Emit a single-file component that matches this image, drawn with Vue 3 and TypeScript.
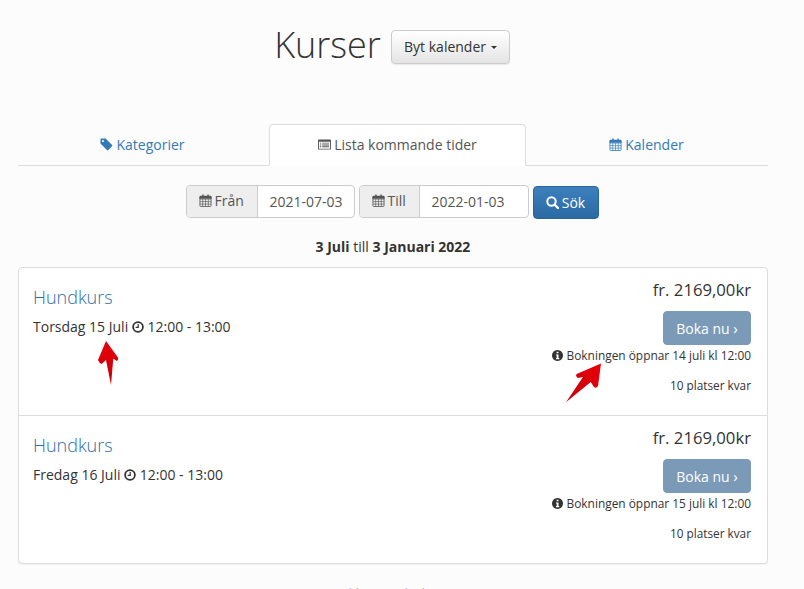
<script setup lang="ts">
interface Course { title: string; date: string; opens: string }
const courses: Course[] = [
  { title: 'Hundkurs', date: 'Torsdag 15 Juli', opens: 'Bokningen öppnar 14 juli kl 12:00' },
  { title: 'Hundkurs', date: 'Fredag 16 Juli', opens: 'Bokningen öppnar 15 juli kl 12:00' },
]
const calGrid = 'M.5 5.5H12.5M.5 8.2H12.5M.5 10.9H12.5M3.5 5.5V13.5M6.5 5.5V13.5M9.5 5.5V13.5'
const calTop = 'M1 2H3V.5H4.5V2H8.5V.5H10V2H12Q13 2 13 3V5H0V3Q0 2 1 2Z'
</script>

<template>
  <div class="page">
    <header class="head">
      <h1>Kurser</h1>
      <button class="switch">Byt kalender <span class="caret"></span></button>
    </header>

    <nav class="tabs">
      <a class="tab">
        <svg class="ic" viewBox="0 0 14 14"><path fill="currentColor" d="M0.5 1.5 Q0.5 0.5 1.5 0.5 H6 L13 7.5 Q13.6 8.2 13 8.9 L8.9 13 Q8.2 13.6 7.5 13 L0.5 6 Z M3.2 2.2 a1.1 1.1 0 1 0 .01 0 Z" fill-rule="evenodd"/></svg>
        Kategorier
      </a>
      <a class="tab active">
        <svg class="ic" viewBox="0 0 14 12"><path fill="currentColor" fill-rule="evenodd" d="M1 0.5 H13 Q14 0.5 14 1.5 V10.5 Q14 11.5 13 11.5 H1 Q0 11.5 0 10.5 V1.5 Q0 0.5 1 0.5 Z M1 3 V10.5 H13 V3 Z M2 4 H3.5 V5 H2 Z M4.5 4 H12 V5 H4.5 Z M2 6 H3.5 V7 H2 Z M4.5 6 H12 V7 H4.5 Z M2 8 H3.5 V9 H2 Z M4.5 8 H12 V9 H4.5 Z"/></svg>
        Lista kommande tider
      </a>
      <a class="tab">
        <svg class="ic" viewBox="0 0 13 14"><path fill="currentColor" :d="calTop"/><rect x=".5" y="3" width="12" height="10.5" rx="1" fill="none" stroke="currentColor" stroke-width=".9"/><path fill="none" stroke="currentColor" stroke-width=".7" :d="calGrid"/></svg>
        Kalender
      </a>
    </nav>

    <form class="filter" @submit.prevent>
      <div class="group g1">
        <span class="addon">
          <svg class="ic" viewBox="0 0 13 14"><path fill="currentColor" :d="calTop"/><rect x=".5" y="3" width="12" height="10.5" rx="1" fill="none" stroke="currentColor" stroke-width=".9"/><path fill="none" stroke="currentColor" stroke-width=".7" :d="calGrid"/></svg>
          Från
        </span>
        <span class="field">2021-07-03</span>
      </div>
      <div class="group g2">
        <span class="addon">
          <svg class="ic" viewBox="0 0 13 14"><path fill="currentColor" :d="calTop"/><rect x=".5" y="3" width="12" height="10.5" rx="1" fill="none" stroke="currentColor" stroke-width=".9"/><path fill="none" stroke="currentColor" stroke-width=".7" :d="calGrid"/></svg>
          Till
        </span>
        <span class="field">2022-01-03</span>
      </div>
      <button class="search">
        <svg class="ic" viewBox="0 0 13 13"><circle cx="5.5" cy="5.5" r="4.2" fill="none" stroke="currentColor" stroke-width="2"/><path d="M8.5 8.5 L12 12" stroke="currentColor" stroke-width="2.4" stroke-linecap="round"/></svg>
        Sök
      </button>
    </form>

    <p class="range"><b>3 Juli</b> till <b>3 Januari 2022</b></p>

    <section class="list">
      <article v-for="c in courses" :key="c.date" class="row">
        <div class="left">
          <a class="title">{{ c.title }}</a>
          <p class="when">
            {{ c.date }}
            <svg class="clock" viewBox="0 0 12 12"><circle cx="6" cy="6" r="4.9" fill="none" stroke="currentColor" stroke-width="1.8"/><path d="M6.2 3 V6.4 H3.6" fill="none" stroke="currentColor" stroke-width="1.2"/></svg>
            12:00 - 13:00
          </p>
        </div>
        <div class="right">
          <div class="price">fr. 2169,00kr</div>
          <button class="book">Boka nu <span class="chev">›</span></button>
          <div class="opens">
            <svg class="info" viewBox="0 0 10 10"><path fill="currentColor" fill-rule="evenodd" d="M5 0 a5 5 0 1 0 .01 0 Z M4.2 1.5 H5.9 V3 H4.2 Z M3.6 4 H5.9 V7.3 H6.6 V8.4 H3.6 V7.3 H4.3 V5.1 H3.6 Z"/></svg>
            {{ c.opens }}
          </div>
          <div class="spots">10 platser kvar</div>
        </div>
      </article>
    </section>

    <p class="foot">Powered by Kursbokningen.se</p>

    <svg class="arrow a1" viewBox="0 0 24 46">
      <defs><linearGradient id="ar1" x1="0" y1="0" x2="0" y2="1"><stop offset="0" stop-color="#e8000a"/><stop offset="1" stop-color="#c40008"/></linearGradient></defs>
      <path fill="url(#ar1)" d="M9 1 L21.3 18 Q21 21 19.7 21 L16.3 18.5 L14 45 L9 20 L4.7 24 Q2 23 1 20 Z"/>
    </svg>
    <svg class="arrow a2" viewBox="0 0 38 42">
      <defs><linearGradient id="ar2" x1="1" y1="0" x2="0" y2="1"><stop offset="0" stop-color="#e8000a"/><stop offset="1" stop-color="#c40008"/></linearGradient></defs>
      <path fill="url(#ar2)" d="M36 1.5 L33 24 Q31 27 29 25 L25.7 20 L1 40.3 L18 15 L13 16 Q10 14 11.7 12 Z"/>
    </svg>
  </div>
</template>

<style scoped>
.page {
  position: relative;
  width: 804px;
  height: 589px;
  overflow: hidden;
  box-sizing: border-box;
  padding: 0 36px 0 18px;
  background: #fcfcfc;
  color: #333;
  font-family: "Open Sans", "Liberation Sans", sans-serif;
  font-size: 14px;
}
.head {
  display: flex;
  align-items: flex-start;
  justify-content: center;
  gap: 10px;
  padding: 30px 2px 0 0;
  height: 94px;
  box-sizing: border-box;
}
h1 {
  margin: -7px 0 0;
  font-size: 36px;
  line-height: 44px;
  font-weight: 300;
  color: #333;
}
.switch {
  width: 119px;
  height: 34px;
  padding: 0 0 2px;
  border: 1px solid #ccc;
  border-radius: 4px;
  background: linear-gradient(#fff, #e4e4e4);
  box-shadow: 0 1px 1px rgba(0,0,0,.08);
  color: #333;
  font: 14px "Open Sans", sans-serif;
}
.caret {
  display: inline-block;
  border-top: 3.5px solid #333;
  border-left: 3.5px solid transparent;
  border-right: 3.5px solid transparent;
  vertical-align: middle;
  margin-left: 1px;
}
.tabs {
  display: grid;
  grid-template-columns: 251px 257px 242px;
  height: 42px;
  margin-top: 30px;
  box-sizing: border-box;
  border-bottom: 1px solid #ddd;
}
.tab {
  display: flex;
  align-items: center;
  justify-content: center;
  gap: 3px;
  height: 41px;
  color: #337ab7;
}
.tab:first-child { padding-right: 2px; }
.tab:last-child { padding-right: 1px; }
.tab.active {
  height: 42px;
  box-sizing: border-box;
  padding-bottom: 2px;
  background: #fff;
  border: 1px solid #ddd;
  border-bottom-color: #fff;
  border-radius: 4px 4px 0 0;
  color: #555;
}
.ic { width: 13px; height: 13px; flex: none; }
.filter {
  display: flex;
  justify-content: center;
  gap: 4px;
  margin-top: 19px;
  height: 34px;
  padding-right: 2px;
}
.group {
  display: flex;
  box-sizing: border-box;
  height: 33px;
  border: 1px solid #ccc;
  border-radius: 4px;
  overflow: hidden;
  background: #fff;
}
.g1 { width: 169px; }
.g2 { width: 170px; }
.addon {
  display: flex;
  align-items: center;
  gap: 3px;
  flex: none;
  width: 71px;
  padding: 0 0 2px 12px;
  box-sizing: border-box;
  background: #eee;
  border-right: 1px solid #ccc;
  color: #555;
}
.g2 .addon { width: 60px; }
.field {
  flex: 1;
  display: flex;
  align-items: center;
  padding-left: 12px;
  color: #555;
}
.search {
  display: flex;
  align-items: center;
  justify-content: center;
  gap: 3px;
  width: 66px;
  height: 33px;
  margin-top: 1px;
  padding: 0;
  border: 1px solid #2b669a;
  border-radius: 4px;
  background: linear-gradient(#3d80bd, #2b6aa3);
  color: #fff;
  font: 14px "Open Sans", sans-serif;
}
.range {
  margin: 18px 0 0;
  height: 20px;
  line-height: 20px;
  text-align: center;
  font-size: 14px;
}
.list {
  margin-top: 10px;
  border: 1px solid #ddd;
  border-radius: 4px;
  background: #fff;
  box-shadow: 0 1px 1px rgba(0,0,0,.05);
}
.row {
  display: flex;
  justify-content: space-between;
  height: 147px;
  box-sizing: border-box;
  padding: 0 16px 0 14px;
}
.row + .row { height: 148px; border-top: 1px solid #ddd; }
.title {
  display: block;
  margin-top: 19px;
  font-size: 18px;
  line-height: 20px;
  font-weight: 300;
  color: #2f6ea5;
}
.when {
  margin: 10px 0 0;
  line-height: 20px;
  font-size: 14px;
  color: #333;
}
.clock { width: 12px; height: 12px; vertical-align: -1px; }
.right {
  display: flex;
  flex-direction: column;
  align-items: flex-end;
}
.price {
  margin-top: 12px;
  font-size: 16.7px;
  line-height: 20px;
  color: #333;
}
.book {
  width: 88px;
  height: 34px;
  margin-top: 11px;
  padding: 0;
  border: 1px solid #7a9ab8;
  border-radius: 4px;
  background: #7a9ab8;
  color: #fff;
  font: 14px "Open Sans", sans-serif;
}
.chev { font-size: 15px; }
.opens {
  margin-top: 2px;
  font-size: 11.9px;
  line-height: 16px;
}
.info { width: 11px; height: 11px; vertical-align: -1px; }
.spots {
  margin-top: 14px;
  font-size: 11.8px;
  line-height: 16px;
}
.foot {
  margin: 20px 0 0;
  text-align: center;
  font-size: 14px;
  color: #aaa;
}
.arrow { position: absolute; }
.a1 { left: 97px; top: 340px; width: 24px; height: 46px; }
.a2 { left: 565px; top: 362px; width: 38px; height: 42px; }
</style>

<style>
html, body { margin: 0; background: #fcfcfc; }
</style>
